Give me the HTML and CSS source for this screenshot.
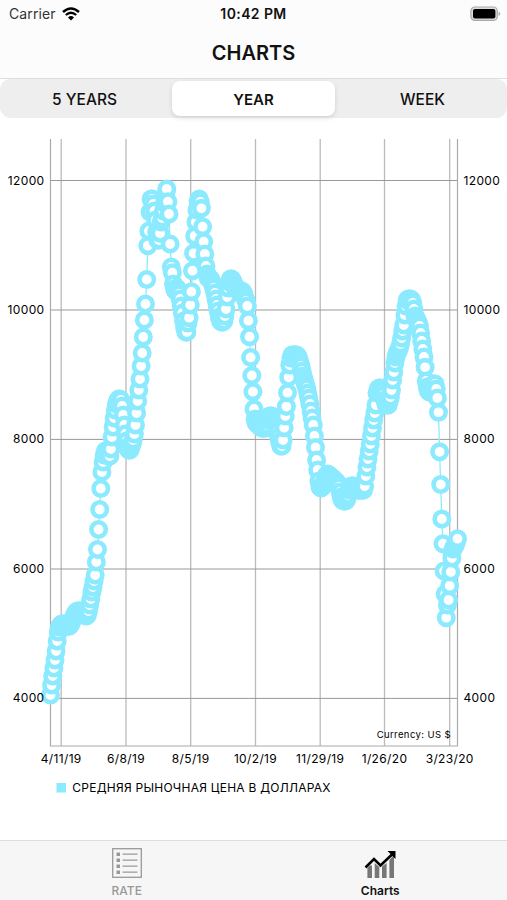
FILE: index.html
```
<!DOCTYPE html>
<html lang="en">
<head>
	<meta charset="utf-8">
	<title>Charts</title>
	<link rel="stylesheet" href="styles.css">
</head>
<body>
<div class="app">
	<header class="header">
		<div class="status">
			<div class="carrier">
				<span>Carrier</span>
				<svg class="wifi" width="18" height="14" viewBox="0 0 18 14">
					<path d="M1 5 Q9 -2 17 5" fill="none" stroke="#000" stroke-width="2.5"/>
					<path d="M3.8 8 Q9 3.4 14.2 8" fill="none" stroke="#000" stroke-width="2.3"/>
					<path d="M6 10.4 Q9 7.8 12 10.4 L9 13.5 Z"/>
				</svg>
			</div>
			<div class="time">10:42 PM</div>
			<svg class="battery" width="31" height="16" viewBox="0 0 31 16">
				<rect x="0.9" y="1" width="26.4" height="13.4" rx="4" fill="#dcdcdc" stroke="#aaa" stroke-width="1.2"/>
				<rect x="3" y="3" width="22.4" height="9.6" rx="2"/>
				<path d="M28.6 5.4 Q32 7.7 28.6 10 Z" fill="#aaa"/>
			</svg>
		</div>
		<h1 class="title">CHARTS</h1>
	</header>

	<div class="segments">
		<div class="segment">5 YEARS</div>
		<div class="segment active">YEAR</div>
		<div class="segment">WEEK</div>
	</div>

	<svg class="chart" id="chart" width="507" height="721" viewBox="0 119 507 721"></svg>

	<nav class="tabs">
		<div class="tab">
			<svg width="32" height="32" viewBox="0 0 32 32">
				<rect x="1.7" y="1.7" width="28.6" height="28.6" fill="none" stroke="#999" stroke-width="1.3"/>
				<path d="M5.5 5.500h3.500v3.500H5.500z M5.500 11.500h3.500v3.500H5.500z M5.500 17.500h3.500v3.500H5.500z M5.500 23.500h3.500v3.500H5.500z" fill="#999"/>
				<path d="M11.500 7.200h15 M11.500 13.200h15 M11.500 19.200h15 M11.500 25.200h15" stroke="#999" stroke-width="1.300"/>
			</svg>
			<span>RATE</span>
		</div>
		<div class="tab selected">
			<svg width="32" height="32" viewBox="0 0 32 32">
				<path d="M3.400 21 L5.800 18.500 L8 18.500 V31 H3.400z M10.700 16 L15.300 20 V31 H10.700z M18 19.500 L22.600 16 V31 H18z M25.400 13 L30 8 V31 H25.400z" fill="#777"/>
				<path d="M1.500 20.500 L10 12 L16.500 18.500 L28 7.500" fill="none" stroke="#000" stroke-width="2.600"/>
				<path d="M23.500 4 H31.500 V12 L28.700 9.200 L26.300 6.800z"/>
			</svg>
			<span>Charts</span>
		</div>
	</nav>
</div>

<script type="text/javascript">
	var chart = document.getElementById("chart");
	var NS = "http://www.w3.org/2000/svg";

	function add(tag, cls, attrs, text){
		var el = document.createElementNS(NS, tag);
		el.setAttribute("class", cls);
		for(var k in attrs){
			el.setAttribute(k, attrs[k]);
		}
		if(text) el.textContent = text;
		chart.appendChild(el);
	}

	var left = 50.5, right = 457.5, top1 = 139, bottom = 746;
	var days = [["4/11/19",61.2],["6/8/19",126],["8/5/19",190.7],["10/2/19",255.5],["11/29/19",320.2],["1/26/20",384.5],["3/23/20",449.7]];
	var levels = [[12000,180.5],[10000,310],[8000,439.4],[6000,569],[4000,698.4]];

	//grid
	days.forEach(function(d){
		add("line", "grid-v", {x1: d[1], x2: d[1], y1: top1, y2: bottom});
		add("text", "label middle", {x: d[1], y: 763}, d[0]);
	});
	levels.forEach(function(l){
		add("line", "grid-h", {x1: left, x2: right, y1: l[1], y2: l[1]});
	});
	add("path", "axis", {d: "M" + left + " " + top1 + "V" + bottom + "H" + right + "V" + top1});

	//one y position for each day
	var ys = [
		695,685,676,668,660,651,641,632,627,625,
		624,624,624,625,625,626,626,626,624,622,
		619,616,614,612,611,611,611,612,613,614,
		615,615,616,615,611,605,599,592,587,581,
		575,562,549.5,529.5,509.5,488.5,472,462,455,451,
		451,453,456,456,449,437,427,418,410,404,
		401,399,399,400,406,415,425,434,441,447,
		450,450,447,444,440,434,425,413,401,390,
		379,366,353,337,320,304,279.5,245.7,231,212,
		199,199,204,211,220,232,240,240,233.3,222,
		218,211,203,195,189,201.7,214,244,267,272.7,
		284,289,291,288,290,294,299,306,313,321,
		328,332,332,323,317.7,305,291.7,270.7,253.3,236,
		222,210,201,199,202,208.3,226.7,241.7,254,266,
		274,278,278,279,281,284,288,293,299,305,
		311,317,321,322,322,321,316,309,297,288,
		282,279,279,281,284,287,289,290,290,290,
		291,291,292,294,298,301,306,320.7,336.7,357.5,
		375.5,391.7,409,419,423,424,425,426,427,428,
		428,428,428,427,425,420,416,416,416,418,
		421,424,428,432,437,442,446,446,440,427.7,
		416,406.5,392.7,377.3,365,358,355,355,355,355,
		355,356,358,362,366,371,376,380,384,388,
		393,398,404,411,418,425,436,447.5,460,470,
		481,487,488,487,485,481,477,475,474,475,
		476,477,478,479,480,481,482,484,487,492,
		497,500,501,501,501,499,495,490,487,486,
		486,486,487,488,489,490,490,490,490,490,
		490,486,476,467,459,451,444,436,428,420,
		413,405,393,389,388,388,389,391,395,400,
		404,405,405,401,397,390,380,372,363,357,
		353,351,348,344,338,331,325,315,306,300,
		299,299,299,300,303,309,316,318,320,323,
		326,333,341,349,357,367.3,381,387,391,392,
		391,388,385,384,384,389,398,412.3,451.8,484.5,
		519,543.7,571,594,617.7,605,600,585.7,572,558,
		549,547,545,542,538.7
	];
	var step = (right - left) / (ys.length - 1);
	var line = "";
	ys.forEach(function(y, i){
		line += (i ? "L" : "M") + (left + i * step).toFixed(1) + " " + y;
	});
	add("path", "price-line", {d: line});
	ys.forEach(function(y, i){
		add("circle", "dot", {cx: (left + i * step).toFixed(1), cy: y, r: 7.2});
	});

	//axis labels go over the dots
	levels.forEach(function(l){
		add("text", "label end", {x: 44.5, y: l[1] + 4}, l[0]);
		add("text", "label", {x: 463.5, y: l[1] + 4}, l[0]);
	});

	add("text", "note end", {x: 451, y: 738}, "Currency: US $");
	add("rect", "legend-box", {x: 56.5, y: 783, width: 9.5, height: 9.5});
	add("text", "legend", {x: 72.3, y: 792}, "СРЕДНЯЯ РЫНОЧНАЯ ЦЕНА В ДОЛЛАРАХ");
</script>
</body>
</html>
```
FILE: styles.css
```
body{
	margin: 0;
	background: #fff;
	font-family: Inter, "Noto Sans", sans-serif;
	color: #111;
}
.app{
	display: flex;
	flex-direction: column;
	width: 507px;
	height: 900px;
	overflow: hidden;
}
.header{
	box-sizing: border-box;
	height: 79px;
	background: #fcfcfc;
	border-bottom: 1px solid #dedede;
}
.status{
	display: grid;
	grid-template-columns: 1fr auto 1fr;
	align-items: center;
	height: 27px;
	padding: 0 6px 0 9px;
	font-size: 14px;
}
.carrier{
	display: flex;
	align-items: center;
	gap: 6px;
	color: #333;
	letter-spacing: 0.1px;
}
.time{
	margin-right: 3px;
	font-weight: 600;
	letter-spacing: 0.4px;
}
.battery{
	justify-self: end;
}
.title{
	margin: 13px 0 0;
	font-size: 20px;
	line-height: 26px;
	font-weight: 600;
	text-align: center;
}
/*переключатель периода*/
.segments{
	display: grid;
	grid-template-columns: 169px 1fr 169px;
	box-sizing: border-box;
	height: 39px;
	margin-bottom: 1px;
	padding: 2px 0;
	border-radius: 10px 10px 11px 11px;
	background: #eee;
}
.segment{
	display: flex;
	align-items: center;
	justify-content: center;
	padding-top: 1px;
	font-size: 15.5px;
	font-weight: 500;
}
.segment.active{
	margin: 0 3px;
	border-radius: 8px;
	background: #fff;
	box-shadow: 0 2px 5px rgba(0,0,0,0.12);
	font-size: 15px;
	font-weight: 600;
}
.chart{
	display: block;
	flex: none;
}
.grid-v{
	stroke: #bbb;
	stroke-width: 1.3;
}
.grid-h{
	stroke: #999;
	stroke-width: 1;
}
.axis{
	fill: none;
	stroke: #aaa;
	stroke-width: 1.2;
}
.price-line{
	fill: none;
	stroke: #8ceaff;
	stroke-width: 1.3;
}
.dot{
	fill: #fff;
	stroke: #8ceaff;
	stroke-width: 4.6;
}
.label{
	font-size: 12px;
	letter-spacing: 0.35px;
}
.note{
	font-size: 9.5px;
	letter-spacing: 0.4px;
}
.legend{
	font-size: 12px;
	letter-spacing: 0.25px;
}
.legend-box{
	fill: #8ceaff;
}
.middle{
	text-anchor: middle;
}
.end{
	text-anchor: end;
}
.tabs{
	display: grid;
	grid-template-columns: 1fr 1fr;
	box-sizing: border-box;
	height: 60px;
	border-top: 1px solid #ddd;
	background: #f7f6f7;
}
.tab{
	display: flex;
	flex-direction: column;
	align-items: center;
	padding-top: 6px;
	font-size: 12px;
	line-height: 15px;
	font-weight: 500;
	color: #999;
}
.tab span{
	margin-top: 4px;
}
.selected{
	color: #111;
	font-weight: 600;
}
```
